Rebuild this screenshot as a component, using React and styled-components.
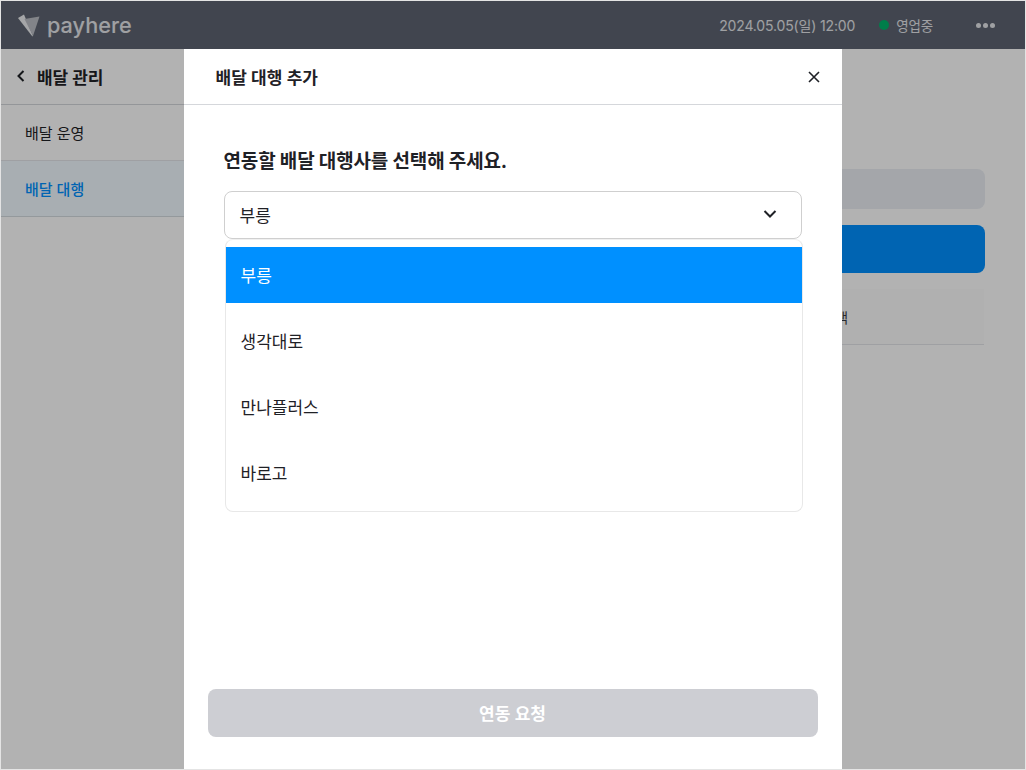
import React from 'react';
import styled, { createGlobalStyle } from 'styled-components';

const GlobalStyle = createGlobalStyle`
    html, body {
        margin: 0;
        padding: 0;
        background: #ffffff;
    }
    body {
        font-family: Inter, "Noto Sans CJK KR", sans-serif;
        color: #1f2126;
    }
    * {
        box-sizing: border-box;
    }
`;

const Frame = styled.div`
    position: relative;
    width: 1026px;
    height: 770px;
    border: 1px solid #e4e4e4;
    overflow: hidden;
    display: flex;
    flex-direction: column;
    background: #ffffff;
`;

const TopBar = styled.header`
    flex: none;
    height: 48px;
    background: #5e6471;
    display: flex;
    align-items: center;
    padding: 0 30px 0 16px;
    color: #e4e6ea;
`;

const Logo = styled.div`
    display: flex;
    align-items: center;
    gap: 6px;
    font-family: Inter, sans-serif;
    font-size: 21.700px;
    font-weight: 500;
`;

const TopInfo = styled.div`
    margin-left: auto;
    display: flex;
    align-items: center;
    font-size: 14px;
    letter-spacing: -0.15px;
`;

const StatusDot = styled.span`
    width: 10px;
    height: 10px;
    border-radius: 50%;
    background: #00b36b;
    margin: 0 7px 0 24px;
`;

const Status = styled.span`
    font-size: 13.500px;
    margin-right: 43px;
`;

const Dots = styled.div`
    display: flex;
    gap: 2px;
`;

const Dot = styled.span`
    width: 5px;
    height: 5px;
    border-radius: 50%;
    background: #e4e6ea;
`;

const Main = styled.div`
    flex: 1;
    display: flex;
    min-height: 0;
`;

const Sidebar = styled.nav`
    flex: none;
    width: 183px;
    display: flex;
    flex-direction: column;
`;

const SideHeader = styled.div`
    height: 56px;
    display: flex;
    align-items: center;
    gap: 10px;
    padding: 0 0 1px 14px;
    font-size: 17px;
    font-weight: 600;
    letter-spacing: -0.1px;
    border-bottom: 1px solid #d5d7db;
`;

const SideItem = styled.div`
    height: 56px;
    display: flex;
    align-items: center;
    padding: 0 0 1px 24px;
    font-size: 15px;
    font-weight: ${props => props.active ? 500 : 400};
    color: ${props => props.active ? '#0090ff' : '#1f2126'};
    background: ${props => props.active ? '#f1f9ff' : 'transparent'};
    border-bottom: 1px solid ${props => props.active ? '#d5dbe0' : '#e4e6ea'};
`;

const Content = styled.section`
    flex: 1;
    display: flex;
    flex-direction: column;
    padding: 120px 40px 0 40px;
    gap: 16px;
`;

const SearchBox = styled.div`
    height: 40px;
    border-radius: 8px;
    background: #ebeef4;
`;

const AddButton = styled.div`
    height: 48px;
    border-radius: 8px;
    background: #0090ff;
`;

const TableRow = styled.div`
    height: 56px;
    display: flex;
    align-items: center;
    padding-left: 526px;
    margin-right: 1px;
    font-size: 14px;
    color: #3a3c42;
    background: #fcfcfc;
    border-bottom: 1px solid #e4e6ea;
    white-space: nowrap;
`;

const Overlay = styled.div`
    position: absolute;
    inset: 0;
    background: rgba(0, 0, 0, 0.3);
    display: flex;
    justify-content: center;
    padding: 48px 0 0 0;
    margin-left: -1px;
`;

const Modal = styled.div`
    width: 658px;
    background: #ffffff;
    display: flex;
    flex-direction: column;
`;

const ModalHeader = styled.div`
    flex: none;
    height: 56px;
    display: flex;
    align-items: center;
    justify-content: space-between;
    padding: 0 20px 0 32px;
    border-bottom: 1px solid #d5d7db;
    font-size: 17px;
    font-weight: 600;
`;

const CloseButton = styled.button`
    border: 0;
    background: none;
    padding: 0;
    display: flex;
    color: #1f2126;
`;

const ModalBody = styled.div`
    flex: 1;
    padding: 44px 40px 0;
`;

const Question = styled.h2`
    margin: 0 0 16px;
    font-size: 19px;
    line-height: 26px;
    font-weight: 700;
    letter-spacing: -0.15px;
`;

const SelectWrap = styled.div`
    position: relative;
`;

const SelectBox = styled.div`
    height: 48px;
    display: flex;
    align-items: center;
    justify-content: space-between;
    padding: 0 23px 2px 15px;
    border: 1px solid #cfcfcf;
    border-radius: 8px;
    font-size: 17px;
    background: #ffffff;
`;

const Menu = styled.ul`
    position: absolute;
    top: 100%;
    left: 1px;
    width: 578px;
    margin: 0;
    padding: 7px 0 10px;
    list-style: none;
    display: flex;
    flex-direction: column;
    gap: 10px;
    background: #ffffff;
    border: 1px solid #e8e8e8;
    border-top: 1px solid #f0f0f0;
    border-radius: 8px;
    overflow: hidden;
`;

const MenuItem = styled.li`
    height: 56px;
    display: flex;
    align-items: center;
    padding: 0 0 2px 15px;
    font-size: 17px;
    color: ${props => props.selected ? '#ffffff' : '#1f2126'};
    background: ${props => props.selected ? '#0090ff' : 'transparent'};
`;

const ModalFooter = styled.div`
    flex: none;
    padding: 0 24px 32px;
`;

const SubmitButton = styled.button`
    width: 100%;
    height: 48px;
    padding: 0 0 2px;
    border: 0;
    border-radius: 8px;
    background: #cdced3;
    color: #ffffff;
    font-family: inherit;
    font-size: 17px;
    font-weight: 600;
`;

const AGENCIES = ['부릉', '생각대로', '만나플러스', '바로고'];

const LogoMark = () => (
    <svg width="24" height="24" viewBox="0 0 24 24">
        <path d="M1 5 L7 1.500 L16 23 Q15.500 23.500 15 23 Z" fill="#eceef1" />
        <path d="M7.500 6 L22.500 3.500 L16 23 Z" fill="#babdc4" />
    </svg>
);

const BackIcon = () => (
    <svg width="12" height="14" viewBox="0 0 12 14" fill="none" stroke="#1f2126" strokeWidth="2">
        <path d="M8.500 2 L3.500 7 L8.500 12" />
    </svg>
);

const CloseIcon = () => (
    <svg width="16" height="16" viewBox="0 0 16 16" fill="none" stroke="#1f2126" strokeWidth="1.600">
        <path d="M3 3 L13 13 M13 3 L3 13" />
    </svg>
);

const ChevronIcon = () => (
    <svg width="16" height="10" viewBox="0 0 16 10" fill="none" stroke="#1f2126" strokeWidth="2">
        <path d="M2.500 2 L8 7.500 L13.500 2" />
    </svg>
);

export default function App() {
    return (
        <Frame>
            <GlobalStyle />
            <TopBar>
                <Logo>
                    <LogoMark />
                    payhere
                </Logo>
                <TopInfo>
                    2024.05.05(일) 12:00
                    <StatusDot />
                    <Status>영업중</Status>
                    <Dots>
                        <Dot />
                        <Dot />
                        <Dot />
                    </Dots>
                </TopInfo>
            </TopBar>
            <Main>
                <Sidebar>
                    <SideHeader>
                        <BackIcon />
                        배달 관리
                    </SideHeader>
                    <SideItem>배달 운영</SideItem>
                    <SideItem active>배달 대행</SideItem>
                </Sidebar>
                <Content>
                    <SearchBox />
                    <AddButton />
                    <TableRow>배달 대행사 선택</TableRow>
                </Content>
            </Main>
            <Overlay>
                <Modal>
                    <ModalHeader>
                        배달 대행 추가
                        <CloseButton>
                            <CloseIcon />
                        </CloseButton>
                    </ModalHeader>
                    <ModalBody>
                        <Question>연동할 배달 대행사를 선택해 주세요.</Question>
                        <SelectWrap>
                            <SelectBox>
                                부릉
                                <ChevronIcon />
                            </SelectBox>
                            <Menu>
                                {AGENCIES.map((name, i) => (
                                    <MenuItem key={name} selected={i === 0}>{name}</MenuItem>
                                ))}
                            </Menu>
                        </SelectWrap>
                    </ModalBody>
                    <ModalFooter>
                        <SubmitButton>연동 요청</SubmitButton>
                    </ModalFooter>
                </Modal>
            </Overlay>
        </Frame>
    );
}
